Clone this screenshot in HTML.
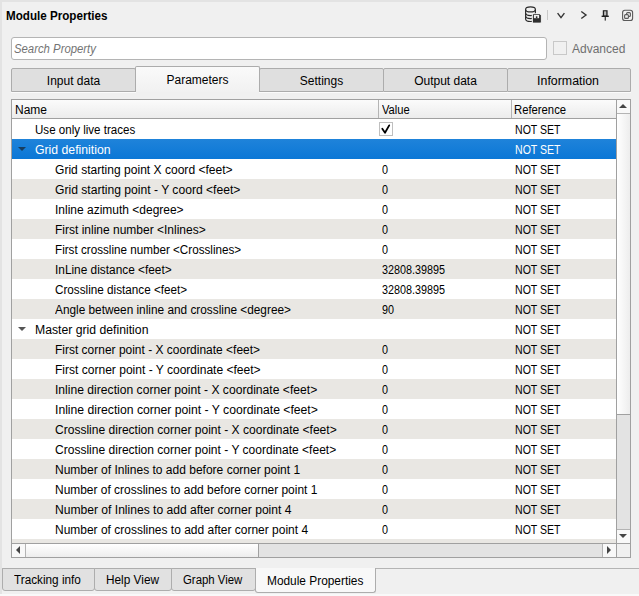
<!DOCTYPE html>
<html><head><meta charset="utf-8"><style>
*{margin:0;padding:0;box-sizing:border-box}
html,body{width:639px;height:596px;overflow:hidden;background:#f0f0f0;font-family:"Liberation Sans",sans-serif;font-size:12px;color:#000}
.abs{position:absolute}
#frameL{position:absolute;left:0;top:0;width:2px;height:596px;background:#e3e3e3}
#frameT{position:absolute;left:0;top:0;width:639px;height:2px;background:#e3e3e3}
#title{position:absolute;left:6px;top:9px;font-weight:bold;font-size:12px;line-height:14px;white-space:nowrap;transform:scaleX(0.97);transform-origin:0 0}
#search{position:absolute;left:11px;top:37px;width:536px;height:23px;background:#fff;border:1px solid #b4b4b4;border-radius:3px}
#search span{position:absolute;left:2px;top:4px;font-style:italic;color:#737373;line-height:14px;transform:scaleX(0.945);transform-origin:0 0;white-space:nowrap}
#adv{position:absolute;left:553px;top:41px;width:14px;height:14px;border:1px solid #c8c8c8;background:#f0f0f0}
#advt{position:absolute;left:572px;top:42px;color:#6f6f6f;line-height:14px}
.tab{position:absolute;top:68px;height:24px;background:#dfdfdf;border:1px solid #acacac;border-radius:2px 2px 0 0;text-align:center;line-height:22px;padding-top:1px;box-shadow:0 1px 0 #fbfbfb}
.tab.sel{top:66px;height:26px;background:linear-gradient(#fafafa,#f1f1f1);border-bottom:none;z-index:2;padding-top:2px;box-shadow:none}
#tbl{position:absolute;left:11px;top:99px;width:620px;height:459px;border:1px solid #a0a0a0;background:#fff;overflow:hidden}
.row{position:absolute;left:0;width:604px;height:20px}
.row .t{position:absolute;top:1px;line-height:20px;white-space:nowrap;transform-origin:0 0}
.row.sel .t{color:#fff}
.tri{position:absolute;left:6px;top:8px;width:0;height:0;border-left:4px solid transparent;border-right:4px solid transparent;border-top:4px solid #555}
.sel .tri{border-top-color:#173d5f}
.chk{position:absolute;left:367px;top:3px;width:14px;height:14px;border:1px solid #bfbfbf;background:#fff}
.chk svg{position:absolute;left:-1px;top:-1px}
#hdr{position:absolute;left:0;top:0;width:604px;height:19px;border-bottom:1px solid #a0a0a0}
.hc{position:absolute;top:0;height:18px;background:linear-gradient(#fbfbfb,#ececec);border-right:1px solid #b4b4b4}
.hc span{position:absolute;left:3px;top:3px;line-height:14px;white-space:nowrap;transform-origin:0 0}
#vsb{position:absolute;left:604px;top:0;width:14px;height:443px;background:#e3e3e3;border-left:1px solid #a0a0a0}
#vup{position:absolute;left:0;top:0;width:13px;height:14px;background:#f8f8f8;border-bottom:1px solid #b4b4b4}
#vth{position:absolute;left:0;top:14px;width:13px;height:301px;background:linear-gradient(90deg,#ffffff,#ededed);border-bottom:1px solid #a0a0a0}
#vdn{position:absolute;left:0;top:429px;width:13px;height:14px;background:#f8f8f8;border-top:1px solid #b4b4b4}
#hsb{position:absolute;left:0;top:443px;width:604px;height:14px;background:#e3e3e3;border-top:1px solid #a0a0a0}
#hl{position:absolute;left:0;top:0;width:14px;height:13px;background:#f8f8f8;border-right:1px solid #b4b4b4}
#hth{position:absolute;left:14px;top:0;width:233px;height:13px;background:linear-gradient(#ffffff,#ededed);border-right:1px solid #a0a0a0}
#hr{position:absolute;left:590px;top:0;width:14px;height:13px;background:#f8f8f8;border-left:1px solid #b4b4b4}
#corner{position:absolute;left:604px;top:443px;width:14px;height:14px;background:#f0f0f0;border-left:1px solid #a0a0a0;border-top:1px solid #a0a0a0}
.arr{position:absolute;width:0;height:0}
.arr.up{left:2px;top:4px;border-left:4px solid transparent;border-right:4px solid transparent;border-bottom:4px solid #444}
.arr.dn{left:2px;top:434px;border-left:4px solid transparent;border-right:4px solid transparent;border-top:4px solid #444}
.arr.lf{left:4px;top:2px;border-top:4px solid transparent;border-bottom:4px solid transparent;border-right:4px solid #444}
.arr.rt{left:595px;top:2px;border-top:4px solid transparent;border-bottom:4px solid transparent;border-left:4px solid #444}
#btline{position:absolute;left:2px;top:568px;width:637px;height:1px;background:#b4b4b4}
.btab{position:absolute;top:568px;height:23px;background:#e1e1e1;border:1px solid #adadad;border-radius:0 0 3px 3px}
.btab span{position:absolute;top:4px;line-height:14px;white-space:nowrap;transform-origin:0 0}
.btab.sel{top:568px;height:25px;background:#f8f8f8;border-top:none;z-index:2}
.btab.sel span{top:6px}
#bstrip{position:absolute;left:0;top:594px;width:639px;height:2px;background:#f9f9f9}

</style></head><body>
<div id="frameT"></div><div id="frameL"></div>
<div id="title">Module Properties</div>
<svg class="abs" style="left:520px;top:4px" width="119" height="20" viewBox="520 4 119 20">
  <g fill="none" stroke="#2b2b2b" stroke-width="1.15">
    <ellipse cx="530.5" cy="9.4" rx="4.9" ry="2.55"/>
    <path d="M525.6 9.4 V18.9 A4.9 2.55 0 0 0 535.4 18.9 V9.4"/>
    <path d="M525.6 13 A4.9 2.55 0 0 0 535.4 13"/>
    <path d="M525.6 16.1 A4.9 2.55 0 0 0 535.4 16.1"/>
  </g>
  <path d="M532.4 13.9 H540 L541.2 15.1 V22.9 H532.4 Z" fill="#2e2e2e" stroke="#f0f0f0" stroke-width="1.2"/>
  <path d="M532.9 14.4 H539.8 L540.7 15.3 V22.4 H532.9 Z" fill="#2e2e2e"/>
  <path d="M533.9 15 H539.1 V18.2 H533.9 Z" fill="#f0f0f0"/>
  <rect x="535.9" y="16.3" width="1.5" height="1.9" fill="#2e2e2e"/>
  <rect x="547" y="10" width="1" height="10" fill="#c8c8c8"/>
  <path d="M557.6 13.2 L561 17.7 L564.4 13.2" fill="none" stroke="#333" stroke-width="1.4"/>
  <path d="M581.3 11.5 L586 15 L581.3 18.5" fill="none" stroke="#333" stroke-width="1.4"/>
  <rect x="602.8" y="10.2" width="4.8" height="6" fill="#222"/>
  <rect x="604.1" y="11.3" width="2.2" height="4.3" fill="#bbb"/>
  <rect x="601.6" y="15.6" width="7.2" height="1.4" fill="#222"/>
  <rect x="604.7" y="17" width="1.1" height="3.6" fill="#222"/>
  <rect x="622.6" y="10.3" width="10" height="10.2" rx="2.3" fill="none" stroke="#5a5a5a" stroke-width="1.1"/>
  <rect x="626.6" y="12.6" width="3.8" height="3.8" rx="1" fill="none" stroke="#5a5a5a" stroke-width="1.1"/>
  <rect x="624.6" y="14.6" width="3.8" height="3.8" rx="1" fill="#f0f0f0" stroke="#5a5a5a" stroke-width="1.1"/>
</svg>
<div id="search"><span>Search Property</span></div>
<div id="adv"></div><div id="advt">Advanced</div>
<div class="tab" style="left:11px;width:125px">Input data</div>
<div class="tab sel" style="left:135px;width:125px">Parameters</div>
<div class="tab" style="left:259px;width:125px">Settings</div>
<div class="tab" style="left:383px;width:125px">Output data</div>
<div class="tab" style="left:507px;width:124px"><span style="display:inline-block;transform:translateX(-1px) scaleX(1.03)">Information</span></div>

<div id="tbl">
<div id="hdr"><div class="hc" style="left:0;width:367px"><span>Name</span></div><div class="hc" style="left:367px;width:133px"><span style="transform:scaleX(0.93)">Value</span></div><div class="hc" style="left:500px;width:104px;border-right:none"><span style="left:2px;transform:scaleX(0.94)">Reference</span></div></div><div class="row" style="top:19px;background:#ffffff"><span class="t" style="left:23px;transform:scaleX(0.9633)">Use only live traces</span><div class="chk"><svg width="14" height="14" viewBox="0 0 14 14"><path d="M3.3 6.7 L6 10.7 L10.2 3.4" fill="none" stroke="#000" stroke-width="1.8" stroke-linecap="round" stroke-linejoin="round"/></svg></div><span class="t" style="left:502.6px;transform:scaleX(0.88)">NOT SET</span></div><div class="row sel" style="top:39px;background:linear-gradient(#1f83da,#0b77d6)"><div class="tri"></div><span class="t" style="left:23px;transform:scaleX(1.0208)">Grid definition</span><span class="t" style="left:502.6px;transform:scaleX(0.88)">NOT SET</span></div><div class="row" style="top:59px;background:#ffffff"><span class="t" style="left:43px;transform:scaleX(1.005)">Grid starting point X coord &lt;feet&gt;</span><span class="t" style="left:370px;transform:scaleX(0.9)">0</span><span class="t" style="left:502.6px;transform:scaleX(0.88)">NOT SET</span></div><div class="row" style="top:79px;background:#e9e7e3"><span class="t" style="left:43px;transform:scaleX(1.0093)">Grid starting point - Y coord &lt;feet&gt;</span><span class="t" style="left:370px;transform:scaleX(0.9)">0</span><span class="t" style="left:502.6px;transform:scaleX(0.88)">NOT SET</span></div><div class="row" style="top:99px;background:#ffffff"><span class="t" style="left:43px;transform:scaleX(0.999)">Inline azimuth &lt;degree&gt;</span><span class="t" style="left:370px;transform:scaleX(0.9)">0</span><span class="t" style="left:502.6px;transform:scaleX(0.88)">NOT SET</span></div><div class="row" style="top:119px;background:#e9e7e3"><span class="t" style="left:43px;transform:scaleX(0.9996)">First inline number &lt;Inlines&gt;</span><span class="t" style="left:370px;transform:scaleX(0.9)">0</span><span class="t" style="left:502.6px;transform:scaleX(0.88)">NOT SET</span></div><div class="row" style="top:139px;background:#ffffff"><span class="t" style="left:43px;transform:scaleX(0.9726)">First crossline number &lt;Crosslines&gt;</span><span class="t" style="left:370px;transform:scaleX(0.9)">0</span><span class="t" style="left:502.6px;transform:scaleX(0.88)">NOT SET</span></div><div class="row" style="top:159px;background:#e9e7e3"><span class="t" style="left:43px;transform:scaleX(0.9879)">InLine distance &lt;feet&gt;</span><span class="t" style="left:370px;transform:scaleX(0.9)">32808.39895</span><span class="t" style="left:502.6px;transform:scaleX(0.88)">NOT SET</span></div><div class="row" style="top:179px;background:#ffffff"><span class="t" style="left:43px;transform:scaleX(0.9756)">Crossline distance &lt;feet&gt;</span><span class="t" style="left:370px;transform:scaleX(0.9)">32808.39895</span><span class="t" style="left:502.6px;transform:scaleX(0.88)">NOT SET</span></div><div class="row" style="top:199px;background:#e9e7e3"><span class="t" style="left:43px;transform:scaleX(0.9851)">Angle between inline and crossline &lt;degree&gt;</span><span class="t" style="left:370px;transform:scaleX(0.9)">90</span><span class="t" style="left:502.6px;transform:scaleX(0.88)">NOT SET</span></div><div class="row" style="top:219px;background:#ffffff"><div class="tri"></div><span class="t" style="left:23px;transform:scaleX(1.0183)">Master grid definition</span><span class="t" style="left:502.6px;transform:scaleX(0.88)">NOT SET</span></div><div class="row" style="top:239px;background:#e9e7e3"><span class="t" style="left:43px;transform:scaleX(0.9981)">First corner point - X coordinate &lt;feet&gt;</span><span class="t" style="left:370px;transform:scaleX(0.9)">0</span><span class="t" style="left:502.6px;transform:scaleX(0.88)">NOT SET</span></div><div class="row" style="top:259px;background:#ffffff"><span class="t" style="left:43px;transform:scaleX(1.0031)">First corner point - Y coordinate &lt;feet&gt;</span><span class="t" style="left:370px;transform:scaleX(0.9)">0</span><span class="t" style="left:502.6px;transform:scaleX(0.88)">NOT SET</span></div><div class="row" style="top:279px;background:#e9e7e3"><span class="t" style="left:43px;transform:scaleX(1.0106)">Inline direction corner point - X coordinate &lt;feet&gt;</span><span class="t" style="left:370px;transform:scaleX(0.9)">0</span><span class="t" style="left:502.6px;transform:scaleX(0.88)">NOT SET</span></div><div class="row" style="top:299px;background:#ffffff"><span class="t" style="left:43px;transform:scaleX(1.0146)">Inline direction corner point - Y coordinate &lt;feet&gt;</span><span class="t" style="left:370px;transform:scaleX(0.9)">0</span><span class="t" style="left:502.6px;transform:scaleX(0.88)">NOT SET</span></div><div class="row" style="top:319px;background:#e9e7e3"><span class="t" style="left:43px;transform:scaleX(1.003)">Crossline direction corner point - X coordinate &lt;feet&gt;</span><span class="t" style="left:370px;transform:scaleX(0.9)">0</span><span class="t" style="left:502.6px;transform:scaleX(0.88)">NOT SET</span></div><div class="row" style="top:339px;background:#ffffff"><span class="t" style="left:43px;transform:scaleX(1.003)">Crossline direction corner point - Y coordinate &lt;feet&gt;</span><span class="t" style="left:370px;transform:scaleX(0.9)">0</span><span class="t" style="left:502.6px;transform:scaleX(0.88)">NOT SET</span></div><div class="row" style="top:359px;background:#e9e7e3"><span class="t" style="left:43px;transform:scaleX(1.0012)">Number of Inlines to add before corner point 1</span><span class="t" style="left:370px;transform:scaleX(0.9)">0</span><span class="t" style="left:502.6px;transform:scaleX(0.88)">NOT SET</span></div><div class="row" style="top:379px;background:#ffffff"><span class="t" style="left:43px;transform:scaleX(0.9957)">Number of crosslines to add before corner point 1</span><span class="t" style="left:370px;transform:scaleX(0.9)">0</span><span class="t" style="left:502.6px;transform:scaleX(0.88)">NOT SET</span></div><div class="row" style="top:399px;background:#e9e7e3"><span class="t" style="left:43px;transform:scaleX(1.007)">Number of Inlines to add after corner point 4</span><span class="t" style="left:370px;transform:scaleX(0.9)">0</span><span class="t" style="left:502.6px;transform:scaleX(0.88)">NOT SET</span></div><div class="row" style="top:419px;background:#ffffff"><span class="t" style="left:43px;transform:scaleX(0.9984)">Number of crosslines to add after corner point 4</span><span class="t" style="left:370px;transform:scaleX(0.9)">0</span><span class="t" style="left:502.6px;transform:scaleX(0.88)">NOT SET</span></div><div class="row" style="top:439px;height:4px;background:#e9e7e3"></div>
<div id="vsb"><div id="vup"></div><div id="vth"></div><div id="vdn"></div><div class="arr up"></div><div class="arr dn"></div></div>
<div id="hsb"><div id="hl"></div><div id="hth"></div><div id="hr"></div><div class="arr lf"></div><div class="arr rt"></div></div>
<div id="corner"></div>
</div>
<div id="btline"></div>
<div class="btab" style="left:2px;width:93px"><span style="left:11px;transform:scaleX(0.98)">Tracking info</span></div>
<div class="btab" style="left:94px;width:78px"><span style="left:10.5px;transform:scaleX(0.985)">Help View</span></div>
<div class="btab" style="left:171px;width:85px"><span style="left:11px;transform:scaleX(0.95)">Graph View</span></div>
<div class="btab sel" style="left:255px;width:121px"><span style="left:10.6px;transform:scaleX(0.99)">Module Properties</span></div>
<div id="bstrip"></div>

</body></html>
